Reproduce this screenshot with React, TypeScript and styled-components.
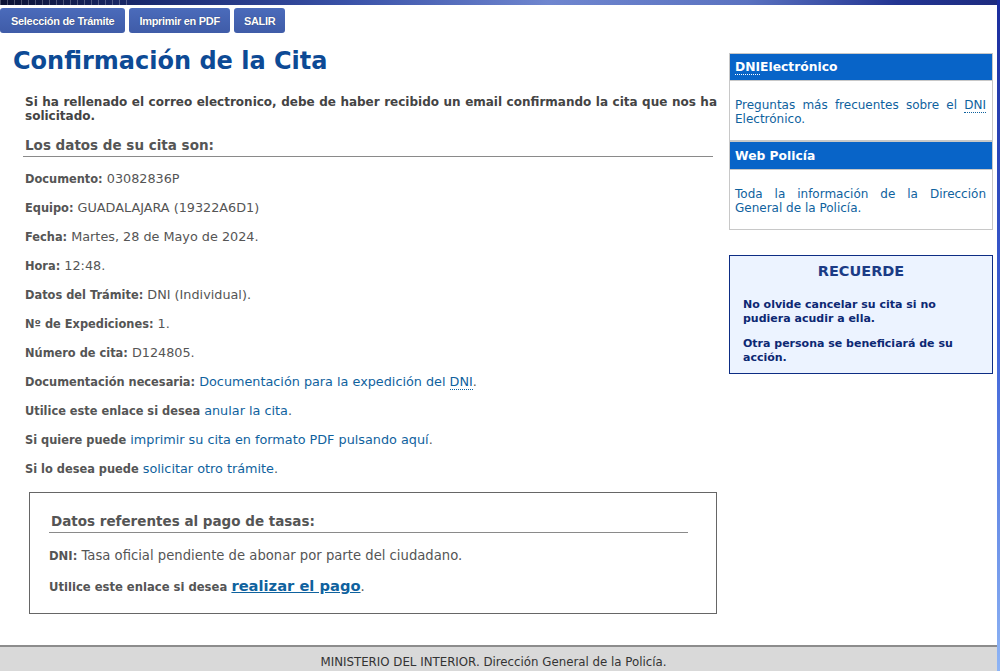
import React from "react";
import styled, { createGlobalStyle } from "styled-components";

const GlobalStyle = createGlobalStyle`
  html, body { margin: 0; padding: 0; }
  body {
    font-family: "DejaVu Sans", Verdana, sans-serif;
    background: linear-gradient(to bottom, #1b2d9c 0%, #3f63d8 50%, #8eb4f4 100%);
    min-height: 671px;
  }
`;

const Page = styled.div`
  width: 997px;
  min-height: 671px;
  background: #fff;
  display: flex;
  flex-direction: column;
`;

const Banner = styled.div`
  height: 5px;
  background:
    repeating-linear-gradient(90deg, rgba(255,255,255,0.25) 0 1px, transparent 1px 7px) 0 0 / 130px 100% no-repeat,
    linear-gradient(90deg, #0b1233 0%, #1a2a70 15%, #3a52a8 35%, #6f86cf 55%, #5a72c0 75%, #233592 90%, #1e2c80 100%);
`;

const Nav = styled.nav`
  display: flex;
  gap: 4px;
  margin-top: 3px;
`;

const NavButton = styled.a<{ $pad?: number }>`
  display: flex;
  align-items: center;
  height: 25px;
  padding: 0 ${(p) => p.$pad ?? 10}px;
  background: linear-gradient(to bottom, #4b6bbb, #3f5ca8);
  border-radius: 3px;
  color: #fff;
  font-family: "Liberation Sans", Arial, sans-serif;
  font-weight: bold;
  font-size: 11px;
  letter-spacing: -0.3px;
  text-shadow: 0 0 1px rgba(0,0,0,0.5);
  cursor: pointer;
`;

const Content = styled.div`
  display: flex;
  align-items: flex-start;
  margin-top: 13px;
`;

const Main = styled.main`
  width: 704px;
  margin-left: 13px;
`;

const Title = styled.h1`
  margin: 0;
  font-size: 24px;
  line-height: 30px;
  font-weight: bold;
  color: #0d4a95;
`;

const Intro = styled.p`
  margin: 19px 0 0 12px;
  font-size: 12px;
  line-height: 14px;
  font-weight: bold;
  color: #444;
  text-align: justify;
`;

const SectionTitle = styled.h2<{ $ml?: number; $mr?: number; $mt?: number }>`
  margin: ${(p) => p.$mt ?? 13}px ${(p) => p.$mr ?? 4}px 0 ${(p) => p.$ml ?? 10}px;
  padding: 0 0 2px 2px;
  font-size: 13.5px;
  line-height: 18px;
  font-weight: bold;
  color: #555;
  border-bottom: 1px solid #8a8a8a;
`;

const Rows = styled.div`
  margin: 14px 0 0 12px;
  display: flex;
  flex-direction: column;
  gap: 14px;
`;

const Row = styled.p`
  margin: 0;
  height: 15px;
  font-size: 12.8px;
  line-height: 15px;
  color: #555;
  white-space: nowrap;
`;

const PayRow = styled.p`
  margin: 0;
  font-size: 13.2px;
  line-height: 15px;
  color: #555;
`;

const Label = styled.b`
  color: #555;
  font-size: 11.4px;
`;

const PayLabel = styled.b`
  color: #555;
  font-size: 11.6px;
`;

const Link = styled.a`
  color: #0f629e;
  text-decoration: none;
`;

const Abbr = styled.abbr`
  text-decoration: none;
  border-bottom: 1px dotted currentColor;
`;

const PayBox = styled.section`
  margin: 16px 0 0 16px;
  border: 1px solid #666;
  padding: 19px 28px 18px 19px;
`;

const PayRows = styled.div`
  margin-top: 15px;
  display: flex;
  flex-direction: column;
  gap: 14px;
`;

const BigLink = styled.a`
  color: #0f629e;
  font-size: 14.7px;
  font-weight: bold;
  text-decoration: underline;
`;

const Sidebar = styled.aside`
  width: 264px;
  margin-left: 12px;
  margin-top: 7px;
  display: flex;
  flex-direction: column;
`;

const LinkBox = styled.div`
  width: 262px;
  border: 1px solid #c8c8c8;
  display: flex;
  flex-direction: column;
`;

const BoxHeader = styled.div<{ $first?: boolean }>`
  background: #0864c8;
  color: #fff;
  font-size: 12.3px;
  font-weight: bold;
  height: ${(p) => (p.$first ? 26 : 27)}px;
  display: flex;
  align-items: center;
  padding-left: 5px;
  border-top: ${(p) => (p.$first ? "none" : "2px solid #c8c8c8")};
  border-bottom: 1px solid #c8c8c8;
`;

const BoxBody = styled.div`
  padding: 17px 6px 0 5px;
  font-size: 12px;
  line-height: 14px;
  text-align: justify;
  color: #0f629e;
  height: 59px;
  box-sizing: border-box;
`;

const Remember = styled.div`
  margin-top: 25px;
  width: 264px;
  border: 1px solid #0d2d84;
  background: #ecf3ff;
  padding: 6px 13px 10px 13px;
  box-sizing: border-box;
  height: 119px;
  color: #0d2873;
`;

const RememberTitle = styled.div`
  text-align: center;
  font-size: 14.5px;
  font-weight: bold;
  line-height: 18px;
  color: #1b3b86;
`;

const RememberText = styled.p<{ $mt?: number }>`
  margin: ${(p) => p.$mt ?? 11}px 0 0;
  font-size: 11px;
  line-height: 14px;
  font-weight: bold;
`;

const Footer = styled.footer`
  margin-top: auto;
  height: 22px;
  border-top: 2px solid #8c8c8c;
  background: #d9d9d9;
  display: flex;
  align-items: flex-end;
  justify-content: center;
  padding-bottom: 2px;
  font-size: 11.8px;
  color: #333;
`;

const FooterText = styled.span`
  margin-left: -10px;
  line-height: 14px;
`;

export default function App() {
  return (
    <>
      <GlobalStyle />
      <Page>
        <Banner />
        <Nav>
          <NavButton $pad={11}>Selección de Trámite</NavButton>
          <NavButton>Imprimir en PDF</NavButton>
          <NavButton>SALIR</NavButton>
        </Nav>
        <Content>
          <Main>
            <Title>Confirmación de la Cita</Title>
            <Intro>
              Si ha rellenado el correo electronico, debe de haber recibido un email
              confirmando la cita que nos ha solicitado.
            </Intro>
            <SectionTitle>Los datos de su cita son:</SectionTitle>
            <Rows>
              <Row><Label>Documento:</Label> 03082836P</Row>
              <Row><Label>Equipo:</Label> GUADALAJARA (19322A6D1)</Row>
              <Row><Label>Fecha:</Label> Martes, 28 de Mayo de 2024.</Row>
              <Row><Label>Hora:</Label> 12:48.</Row>
              <Row><Label>Datos del Trámite:</Label> DNI (Individual).</Row>
              <Row><Label>Nº de Expediciones:</Label> 1.</Row>
              <Row><Label>Número de cita:</Label> D124805.</Row>
              <Row>
                <Label>Documentación necesaria:</Label>{" "}
                <Link>Documentación para la expedición del <Abbr>DNI</Abbr></Link>.
              </Row>
              <Row><Label>Utilice este enlace si desea</Label> <Link>anular la cita</Link>.</Row>
              <Row><Label>Si quiere puede</Label> <Link>imprimir su cita en formato PDF pulsando aquí</Link>.</Row>
              <Row><Label>Si lo desea puede</Label> <Link>solicitar otro trámite</Link>.</Row>
            </Rows>
            <PayBox>
              <SectionTitle $ml={0} $mr={0} $mt={0}>Datos referentes al pago de tasas:</SectionTitle>
              <PayRows>
                <PayRow><PayLabel>DNI:</PayLabel> Tasa oficial pendiente de abonar por parte del ciudadano.</PayRow>
                <PayRow><PayLabel>Utilice este enlace si desea</PayLabel> <BigLink>realizar el pago</BigLink>.</PayRow>
              </PayRows>
            </PayBox>
          </Main>
          <Sidebar>
            <LinkBox>
              <BoxHeader $first><Abbr>DNI</Abbr>Electrónico</BoxHeader>
              <BoxBody>
                Preguntas más frecuentes sobre el <Abbr>DNI</Abbr> Electrónico.
              </BoxBody>
              <BoxHeader>Web Policía</BoxHeader>
              <BoxBody>
                Toda la información de la Dirección General de la Policía.
              </BoxBody>
            </LinkBox>
            <Remember>
              <RememberTitle>RECUERDE</RememberTitle>
              <RememberText $mt={18}>No olvide cancelar su cita si no pudiera acudir a ella.</RememberText>
              <RememberText>Otra persona se beneficiará de su acción.</RememberText>
            </Remember>
          </Sidebar>
        </Content>
        <Footer>
          <FooterText>MINISTERIO DEL INTERIOR. Dirección General de la Policía.</FooterText>
        </Footer>
      </Page>
    </>
  );
}
